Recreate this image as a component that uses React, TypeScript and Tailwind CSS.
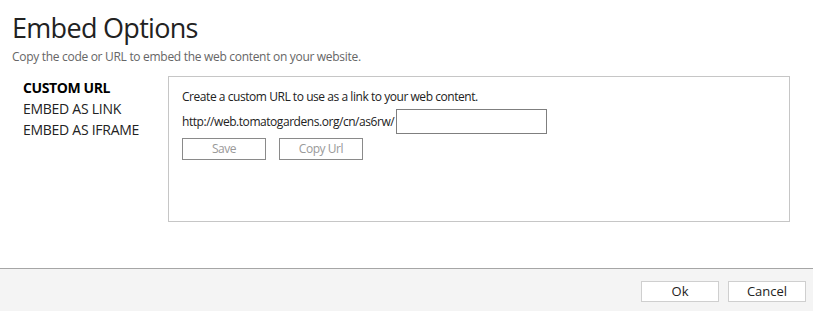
import React, { useState } from "react";

const navItems = ["CUSTOM URL", "EMBED AS LINK", "EMBED AS IFRAME"];

export default function App() {
  const [active, setActive] = useState(0);
  const [slug, setSlug] = useState("");

  return (
    <div className="flex h-[311px] w-[813px] flex-col bg-white font-['Open_Sans',sans-serif] text-[#222]">
      <div className="flex-1">
        <h1 className="pl-[12px] pt-[12px] text-[27px] leading-[32px] tracking-[-0.7px] text-[#222]">Embed Options</h1>
        <p className="mt-[5px] pl-[12px] text-[12px] leading-[16px] tracking-[-0.3px] text-[#666]">
          Copy the code or URL to embed the web content on your website.
        </p>
        <div className="mt-[11px] flex">
          <nav className="flex w-[168px] flex-col pl-[23px] pt-[1px]">
            {navItems.map((item, i) => (
              <button
                key={item}
                type="button"
                onClick={() => setActive(i)}
                className={
                  i === active
                    ? "text-left text-[14px] font-bold leading-[21px] tracking-[-0.4px] text-black"
                    : "text-left text-[14px] leading-[21px] tracking-[-0.27px] text-[#222]"
                }
              >
                {item}
              </button>
            ))}
          </nav>
          <div className="h-[146px] w-[622px] border border-[#c6c6c6] pl-[13px] pt-[12px] tracking-[-0.45px]">
            <p className="text-[12px] leading-[16px]">Create a custom URL to use as a link to your web content.</p>
            <div className="mt-[4px] flex items-center gap-[2px]">
              <span className="text-[12px] leading-[16px]">http://web.tomatogardens.org/cn/as6rw/</span>
              <input
                className="h-[25px] w-[151px] border border-[#7f7f7f] px-1 text-[12px] outline-none"
                value={slug}
                onChange={(e) => setSlug(e.target.value)}
              />
            </div>
            <div className="mt-[4px] flex gap-[13px]">
              <button
                type="button"
                className="h-[22px] w-[84px] border border-[#8a8a8a] bg-white text-[12px] text-[#999]"
              >
                Save
              </button>
              <button
                type="button"
                className="h-[22px] w-[84px] border border-[#8a8a8a] bg-white text-[12px] text-[#999]"
              >
                Copy Url
              </button>
            </div>
          </div>
        </div>
      </div>
      <div className="flex h-[43px] justify-end gap-[9px] border-t border-[#a6a6a6] bg-[#f4f4f4] pr-[7px] pt-[12px]">
        <button type="button" className="h-[21px] w-[78px] border border-[#cfcfcf] bg-white text-[13px] text-[#222]">
          Ok
        </button>
        <button type="button" className="h-[21px] w-[78px] border border-[#cfcfcf] bg-white text-[13px] text-[#222]">
          Cancel
        </button>
      </div>
    </div>
  );
}
